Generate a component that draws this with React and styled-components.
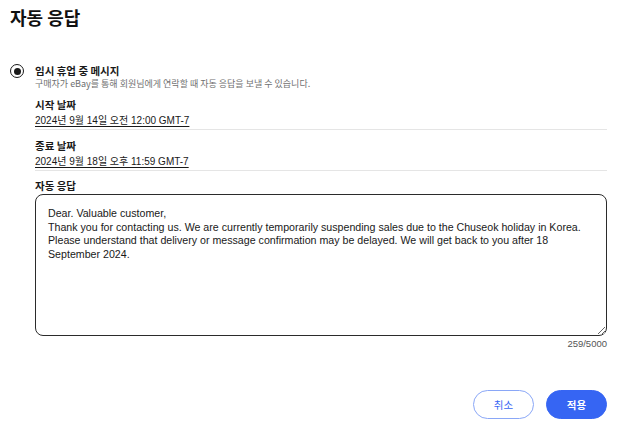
import React, { useEffect, useRef } from 'react';
import styled, { createGlobalStyle } from 'styled-components';

const GlobalStyle = createGlobalStyle`
  html, body {
    margin: 0;
    padding: 0;
    background: #fff;
  }
  body {
    font-family: "Liberation Sans", Arial, "Noto Sans CJK KR", sans-serif;
    color: #191919;
  }
`;

const message =
  'Dear. Valuable customer,\nThank you for contacting us. We are currently temporarily suspending sales due to the Chuseok holiday in Korea. Please understand that delivery or message confirmation may be delayed. We will get back to you after 18 September 2024. ';

export default function App() {
  const areaRef = useRef(null);

  useEffect(() => {
    const el = areaRef.current;
    if (el) {
      el.focus();
      el.setSelectionRange(el.value.length, el.value.length);
    }
  }, []);

  return (
    <Page>
      <GlobalStyle />
      <Title>자동 응답</Title>

      <OptionRow>
        <Radio aria-checked="true" role="radio" />
        <OptionBody>
          <OptionLabel>임시 휴업 중 메시지</OptionLabel>
          <OptionHint>구매자가 eBay를 통해 회원님에게 연락할 때 자동 응답을 보낼 수 있습니다.</OptionHint>

          <Field $first>
            <FieldLabel>시작 날짜</FieldLabel>
            <DateValue>2024년 9월 14일 오전 12:00 GMT-7</DateValue>
          </Field>

          <Field>
            <FieldLabel>종료 날짜</FieldLabel>
            <DateValue>2024년 9월 18일 오후 11:59 GMT-7</DateValue>
          </Field>

          <FieldLabel $gap>자동 응답</FieldLabel>
          <MessageBox ref={areaRef} defaultValue={message} />
          <Counter>259/5000</Counter>
        </OptionBody>
      </OptionRow>

      <Actions>
        <Button>취소</Button>
        <Button $primary>적용</Button>
      </Actions>
    </Page>
  );
}

const Page = styled.div`
  width: 624px;
  padding: 3px 17px 0 10px;
  box-sizing: border-box;
`;

const Title = styled.h1`
  margin: 0;
  font-family: "Noto Sans CJK KR", sans-serif;
  font-size: 18px;
  font-weight: 700;
  line-height: 28px;
  color: #111;
`;

const OptionRow = styled.div`
  display: flex;
  align-items: flex-start;
  gap: 11px;
  margin-top: 32px;
`;

const Radio = styled.span`
  flex: none;
  width: 14px;
  height: 14px;
  margin-top: 1px;
  border: 1.5px solid #191919;
  border-radius: 50%;
  box-sizing: border-box;
  display: flex;
  align-items: center;
  justify-content: center;

  &::after {
    content: '';
    width: 7px;
    height: 7px;
    border-radius: 50%;
    background: #191919;
  }
`;

const OptionBody = styled.div`
  flex: 1;
  display: flex;
  flex-direction: column;
`;

const OptionLabel = styled.div`
  font-family: "Noto Sans CJK KR", sans-serif;
  font-size: 10.5px;
  font-weight: 700;
  line-height: 15px;
`;

const OptionHint = styled.div`
  font-family: "Noto Sans CJK KR", sans-serif;
  font-size: 9px;
  line-height: 12px;
  color: #707070;
`;

const Field = styled.div`
  margin-top: ${(p) => (p.$first ? '7px' : '8px')};
  border-bottom: 1.5px solid #e5e5e5;
`;

const FieldLabel = styled.div`
  font-family: "Noto Sans CJK KR", sans-serif;
  font-size: 10.5px;
  font-weight: 700;
  line-height: 15px;
  margin-top: ${(p) => (p.$gap ? '7px' : '0')};
`;

const DateValue = styled.div`
  font-family: "Liberation Sans", "Noto Sans CJK KR", sans-serif;
  font-size: 10px;
  line-height: 17px;
  text-decoration: underline;
  text-underline-offset: 2px;
  color: #191919;
`;

const MessageBox = styled.textarea`
  display: block;
  margin-top: 1px;
  width: 100%;
  height: 142px;
  box-sizing: border-box;
  padding: 12px 12px 10px;
  border: 1.5px solid #2b2b2b;
  border-radius: 8px;
  font-family: "Liberation Sans", Arial, sans-serif;
  font-size: 10.65px;
  line-height: 13.6px;
  color: #191919;
  outline: none;
  resize: vertical;
`;

const Counter = styled.div`
  text-align: right;
  font-family: "Liberation Sans", Arial, sans-serif;
  font-size: 9.5px;
  line-height: 12px;
  color: #555;
  margin-top: 2px;
`;

const Actions = styled.div`
  display: flex;
  justify-content: flex-end;
  gap: 12px;
  margin-top: 40px;
`;

const Button = styled.button`
  width: 61px;
  height: 29px;
  border-radius: 15px;
  font-family: "Noto Sans CJK KR", sans-serif;
  font-size: 10.5px;
  font-weight: ${(p) => (p.$primary ? 700 : 400)};
  cursor: pointer;
  border: 1px solid ${(p) => (p.$primary ? '#3665f3' : '#8aa7f7')};
  background: ${(p) => (p.$primary ? '#3665f3' : '#fff')};
  color: ${(p) => (p.$primary ? '#fff' : '#3665f3')};
`;
